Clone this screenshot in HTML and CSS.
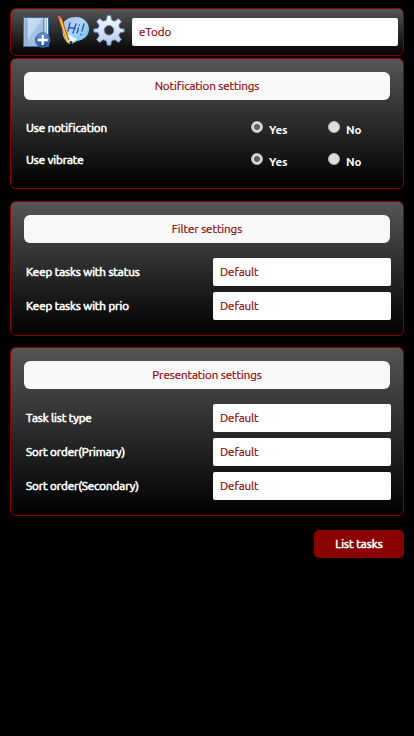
FILE: index.html
```html
<!DOCTYPE html>
<html lang="en">
<head>
<meta charset="utf-8">
<title>eTodo</title>
<link rel="stylesheet" href="styles.css">
</head>
<body>
<header class="toolbar">
  <svg class="icon icon-add" viewBox="0 0 30 32">
    <defs>
      <linearGradient id="book" x1="0" y1="0" x2="1" y2="1"><stop offset="0" stop-color="#c7dcf0"/><stop offset=".55" stop-color="#a3c0e0"/><stop offset="1" stop-color="#86acd5"/></linearGradient>
      <linearGradient id="plus" x1="0" y1="0" x2="0" y2="1"><stop offset="0" stop-color="#6e96c8"/><stop offset="1" stop-color="#1f5296"/></linearGradient>
    </defs>
    <path d="M1.500 1.500h25v29h-25z" fill="url(#book)" stroke="#3e6ba5"/>
    <path d="M2.500 2.500h3v27h-3z" fill="#8fb0d7"/>
    <path d="M6 2.500L20 2.500L6 23z" fill="#d8e8f6" opacity=".5"/>
    <path d="M21.500 2v28" stroke="#668fbf"/>
    <path d="M23.500 2v28" stroke="#c8dcf0"/>
    <path d="M25.500 2v28" stroke="#edf5fc"/>
    <circle cx="20.700" cy="24" r="7.300" fill="url(#plus)" stroke="#426fa8"/>
    <path d="M20.700 19v10M15.700 24h10" stroke="#fff" stroke-width="2.300"/>
  </svg>
  <svg class="icon icon-note" viewBox="0 0 32 32">
    <defs>
      <linearGradient id="bubble" x1="0" y1="0" x2="1" y2="1"><stop offset="0" stop-color="#a5b8ed"/><stop offset=".45" stop-color="#b1d7fa"/><stop offset=".75" stop-color="#83c8f4"/><stop offset="1" stop-color="#5d8bd8"/></linearGradient>
    </defs>
    <path d="M4 12C5 5 11 2 18 2c8 0 13 6 13 12 0 7-5 11-12 12l-5 3c-4 0-8-4-9-9z" fill="url(#bubble)"/>
    <path d="M7 18l12 6-6 5-3-1z" fill="#ddfaff"/>
    <path d="M12 8l-2 8M18 9l-3 9M11 12.500l6 1M20.500 13l-1.500 5M21.200 10v.4M26 9l-2 7M23 19.500v.3" fill="none" stroke="#3155a6" stroke-width="1.400" stroke-linecap="round"/>
    <path d="M2.200 3L10 26" stroke="#b95d13" stroke-width="3.500"/>
    <path d="M2 3L9.500 26" stroke="#ffc348" stroke-width="1.900"/>
    <path d="M1 1l1 3" stroke="#cf7260" stroke-width="2.500"/>
    <path d="M8 26l3.500-1 .5 4z" fill="#edd6a7"/>
    <circle cx="13" cy="27.500" r="1.500" fill="#172131"/>
  </svg>
  <svg class="icon icon-gear" viewBox="0 0 32 32">
    <defs>
      <linearGradient id="gear" x1="0" y1="0" x2="0" y2="1"><stop offset="0" stop-color="#f4f8ff"/><stop offset=".5" stop-color="#dbe4f4"/><stop offset="1" stop-color="#b4c6e7"/></linearGradient>
    </defs>
    <path fill-rule="evenodd" fill="url(#gear)" stroke="#5c82c6" stroke-width=".9" stroke-linejoin="round" d="M14.300 1.500h3.400l1 4.500 3 1.200 3.800-2.600 2.900 2.900-2.600 3.800 1.200 3 4.200.7v3l-4.200.7-1.200 3 2.600 3.800-2.900 2.900-3.800-2.600-3 1.200-1 4.200h-3.400l-1-4.200-3-1.200-3.800 2.600-2.900-2.900 2.600-3.800-1.200-3-4.200-.7v-3l4.200-.7 1.200-3-2.600-3.800 2.900-2.900 3.800 2.600 3-1.200zM16 11.500a4.800 4.800 0 1 0 0 9.600 4.800 4.800 0 0 0 0-9.600z"/>
  </svg>
  <div class="field list-name">eTodo</div>
</header>
<section class="panel notification">
  <h2>Notification settings</h2>
  <div class="row radio-row"><span>Use notification</span><label class="choice"><i class="radio checked"></i><b>Yes</b></label><label class="choice"><i class="radio"></i><b>No</b></label></div>
  <div class="row radio-row"><span>Use vibrate</span><label class="choice"><i class="radio checked"></i><b>Yes</b></label><label class="choice"><i class="radio"></i><b>No</b></label></div>
</section>
<section class="panel filter">
  <h2>Filter settings</h2>
  <div class="row"><span>Keep tasks with status</span><div class="field">Default</div></div>
  <div class="row"><span>Keep tasks with prio</span><div class="field">Default</div></div>
</section>
<section class="panel presentation">
  <h2>Presentation settings</h2>
  <div class="row"><span>Task list type</span><div class="field">Default</div></div>
  <div class="row"><span>Sort order(Primary)</span><div class="field">Default</div></div>
  <div class="row"><span>Sort order(Secondary)</span><div class="field">Default</div></div>
</section>
<button class="submit">List tasks</button>
</body>
</html>
```
FILE: styles.css
```css
* { box-sizing: border-box; }
body {
  margin: 0;
  min-height: 736px;
  padding: 8px 10px;
  display: flex;
  flex-direction: column;
  background: #000;
  color: #fff;
  font: 11.6px/16px "Ubuntu", "Noto Sans", sans-serif;
  letter-spacing: -.09px;
}
.toolbar, .panel {
  border: 1px solid #8b0000;
  border-radius: 6px;
  background: linear-gradient(#555, #000);
}
.toolbar {
  height: 48px;
  display: flex;
  align-items: center;
  padding: 0 5px 0 11px;
}
.icon { flex: none; height: 32px; }
.icon-add { width: 30px; margin-right: 6px; }
.icon-note { width: 32px; margin: 0 2px 2px 0; }
.icon-gear { width: 32px; margin: 0 7px 4px 1px; }
.field {
  height: 28px;
  padding: 6px 7px;
  border-radius: 2px;
  background: #fff;
  color: #8b0000;
}
.field, h2 { -webkit-text-stroke: .2px #8b0000; }
.list-name { flex: 1; }
.panel { padding: 13px 12px 0 13px; }
.notification { height: 131px; margin-top: 2px; }
.filter { height: 135px; margin-top: 12px; }
.presentation { height: 169px; margin-top: 11px; }
h2 {
  height: 28px;
  margin: 0 1px 15px 0;
  padding: 6px 0;
  border-radius: 6px;
  background: #f8f8f8;
  color: #8b0000;
  font: inherit;
  text-align: center;
}
.row {
  display: grid;
  grid-template-columns: 187px 178px;
  align-items: center;
  height: 28px;
  margin: 0 0 6px 2px;
}
.row > span, .submit { -webkit-text-stroke: .6px #fff; }
.radio-row {
  grid-template-columns: 225px 77px 60px;
  height: 26px;
}
.choice { display: flex; gap: 6px; }
.choice b { padding-top: 3px; font-weight: 700; }
.radio {
  width: 12px;
  height: 12px;
  margin-top: 2px;
  border: 1px solid #bbb;
  border-radius: 50%;
  background: linear-gradient(#ddd, #e0e0e0);
}
.radio.checked { background: radial-gradient(circle, #606060 0 2.7px, #ddd 3.3px); }
.submit {
  width: 90px;
  height: 28px;
  margin-top: 14px;
  padding: 0;
  align-self: flex-end;
  border: 0;
  border-radius: 5px;
  background: #8b0000;
  color: #fff;
  font: inherit;
  letter-spacing: 0;
}
```
